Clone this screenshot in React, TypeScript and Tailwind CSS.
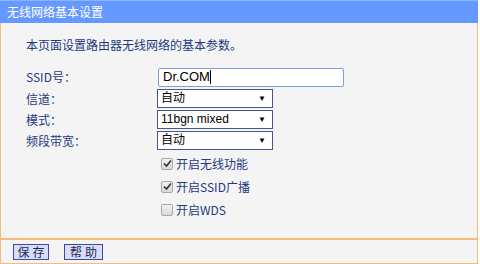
import React from "react";

const orange = "border-[#f5bd7a]";

const Label = ({children}: {children: React.ReactNode}) => (
    <div className="w-[131px] text-[12px] leading-[16px] text-[#1e3a82]">{children}</div>
);

const FakeSelect = ({value}: {value: string}) => (
    <div className="w-[116px] h-[19px] border border-[#47568f] bg-white flex items-center pl-[3px] pr-[6px] font-['Liberation_Sans','Noto_Sans_CJK_SC',sans-serif] text-[12px] text-black">
        <span className="flex-1 leading-[17px]">{value}</span>
        <span className="text-[8px] leading-none">▼</span>
    </div>
);

const Check = ({checked, label}: {checked: boolean; label: string}) => (
    <div className="h-[23px] flex items-center pl-[4px]">
        <div className="w-[12px] h-[12px] rounded-[2px] border border-[#a9a9a9] bg-gradient-to-b from-[#f2f2f2] to-[#d9d9d9] flex items-center justify-center">
            {checked && (
                <svg width="9" height="9" viewBox="0 0 9 9">
                    <path d="M1 4.5 L3.5 7 L8 1.5" stroke="#333" strokeWidth="1.6" fill="none"/>
                </svg>
            )}
        </div>
        <span className="ml-[3px] text-[12px] leading-[16px] text-[#1e3a82]">{label}</span>
    </div>
);

const Btn = ({children, w}: {children: React.ReactNode; w: string}) => (
    <div className={`${w} h-[16px] border border-[#3a4aa8] bg-[#d9ddf7] flex items-center justify-center text-[12px] leading-none tracking-[3px] pl-[3px] text-[#1b2a55]`}>
        {children}
    </div>
);

export default function App() {
    return (
        <div className="w-[480px] h-[264px] bg-white font-['Noto_Sans_CJK_SC',sans-serif]">
            <div className="w-[478px]">
                <div className="h-[23px] bg-[#6699ff] border-t border-[#8fb3ff] text-white text-[12px] leading-[21px] pl-[7px]">
                    无线网络基本设置
                </div>
                <div className={`h-[215px] border-x ${orange} bg-[#f4f4f4] pt-[14px] pl-[25px]`}>
                    <p className="text-[12px] leading-[16px] text-[#1e3a82]">本页面设置路由器无线网络的基本参数。</p>
                    <div className="mt-[13px] flex flex-col">
                        <div className="h-[22px] flex items-center">
                            <Label>SSID号：</Label>
                            <div className="w-[186px] h-[19px] ml-[1px] border border-[#7f9fd6] rounded-[2px] bg-white flex items-center pl-[4px] font-['Liberation_Sans',sans-serif] text-[13px] text-black">
                                Dr.COM<span className="w-[1px] h-[14px] bg-black"/>
                            </div>
                        </div>
                        <div className="h-[21px] flex items-center">
                            <Label>信道：</Label>
                            <FakeSelect value="自动"/>
                        </div>
                        <div className="h-[21px] flex items-center">
                            <Label>模式：</Label>
                            <FakeSelect value="11bgn mixed"/>
                        </div>
                        <div className="h-[21px] flex items-center">
                            <Label>频段带宽：</Label>
                            <FakeSelect value="自动"/>
                        </div>
                        <div className="ml-[131px] mt-[1px] flex flex-col">
                            <Check checked label="开启无线功能"/>
                            <Check checked label="开启SSID广播"/>
                            <Check checked={false} label="开启WDS"/>
                        </div>
                    </div>
                </div>
                <div className="h-[2px] bg-[#f5bd7a]"/>
                <div className={`h-[24px] border-x border-b ${orange} bg-[#f4f4f4] flex items-center gap-[15px] pl-[12px]`}>
                    <Btn w="w-[36px]">保存</Btn>
                    <Btn w="w-[39px]">帮助</Btn>
                </div>
            </div>
        </div>
    );
}
